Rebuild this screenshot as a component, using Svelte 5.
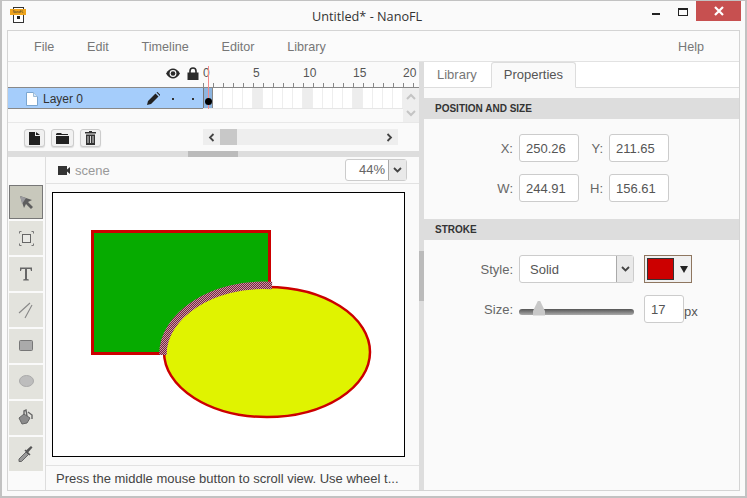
<script>
  const menus = ['File', 'Edit', 'Timeline', 'Editor', 'Library'];
  const frames = Array.from({ length: 20 }, (_, i) => i);
  const labels = [0, 5, 10, 15, 20];
  const tools = ['select', 'transform', 'text', 'line', 'rect', 'ellipse', 'fill', 'dropper'];
</script>

<div class="window">
  <header class="titlebar">
    <div class="logo">
      <span class="logo-band">NanoFL</span>
      <span class="logo-dot"></span>
    </div>
    <div class="title">Untitled* - NanoFL</div>
    <div class="controls">
      <span class="min"></span>
      <span class="max"></span>
      <span class="close">
        <svg width="12" height="12" viewBox="0 0 12 12"><path d="M2 2l8 8M10 2l-8 8" stroke="#fff" stroke-width="2.2" /></svg>
      </span>
    </div>
  </header>

  <div class="frame">
    <nav class="menu">
      {#each menus as m}
        <span class="menu-item">{m}</span>
      {/each}
      <span class="help">Help</span>
    </nav>

    <div class="main">
      <div class="left">
        <section class="timeline">
          <div class="tl-head">
            <div class="tl-icons">
              <svg width="14" height="11" viewBox="0 0 14 11"><path d="M0 5.5C2 2 4.5.5 7 .5s5 1.500 7 5c-2 3.500-4.500 5-7 5s-5-1.500-7-5z" fill="#2a2a2a" /><circle cx="7" cy="5.500" r="3.400" fill="#fafafa" /><circle cx="7" cy="5.500" r="2.300" fill="#2a2a2a" /></svg>
              <svg width="12" height="13" viewBox="0 0 12 13"><path d="M3 6V4a3 3 0 0 1 6 0v2" fill="none" stroke="#2a2a2a" stroke-width="1.600" /><rect x="0.500" y="5.500" width="11" height="7.500" fill="#2a2a2a" /></svg>
            </div>
            <div class="ruler">
              <div class="ruler-labels">
                {#each labels as l}
                  <span>{l}</span>
                {/each}
              </div>
              <div class="ticks"></div>
            </div>
          </div>

          <div class="tl-row">
            <div class="layer">
              <svg class="doc" width="12" height="14" viewBox="0 0 12 14"><path d="M.5.500h7l4 4v9H.5z" fill="#fff" stroke="#7ba6d0" /><path d="M7.500.500v4h4" fill="#d8e6f4" stroke="#9dbbd8" /></svg>
              <span class="layer-name">Layer 0</span>
              <svg class="pencil" width="13" height="13" viewBox="0 0 13 13"><path d="M0 13l1-4 7.500-7.500 3 3L4 12zM9.500.500l1-.500 3 3-.500 1z" fill="#222" /></svg>
              <span class="dot"></span>
              <span class="dot"></span>
            </div>
            <div class="cells">
              {#each frames as f}
                <span class="cell" class:active={f === 0} class:fifth={f % 5 === 0 && f > 0}></span>
              {/each}
            </div>
            <div class="v-scroll">
              <svg width="10" height="7" viewBox="0 0 10 7"><path d="M1 6l4-4 4 4" fill="none" stroke="#c4c4c4" stroke-width="2" /></svg>
              <svg width="10" height="7" viewBox="0 0 10 7"><path d="M1 1l4 4 4-4" fill="none" stroke="#c4c4c4" stroke-width="2" /></svg>
            </div>
            <div class="playhead"></div>
            <span class="keyframe"></span>
          </div>

          <div class="tl-tools">
            <div class="tl-buttons">
              <button class="small-btn" aria-label="New layer">
                <svg width="11" height="13" viewBox="0 0 11 13"><path d="M0 0h6v4h5v9H0zM7 0l4 3H7z" fill="#222" /></svg>
              </button>
              <button class="small-btn wide" aria-label="New folder">
                <svg width="13" height="11" viewBox="0 0 13 11"><path d="M1 0h4l1 1h6v1H0V1zM0 3h13v8H0z" fill="#222" /></svg>
              </button>
              <button class="small-btn" aria-label="Delete layer">
                <svg width="11" height="14" viewBox="0 0 11 14"><path d="M4 0h3v1h4v1.500H0V1h4zM1 3.500h9V14H1z" fill="#333" /><path d="M3 5v7M5.500 5v7M8 5v7" stroke="#ddd" /></svg>
              </button>
            </div>
            <div class="h-scroll">
              <svg width="7" height="9" viewBox="0 0 7 9"><path d="M5.500 1L2 4.500 5.500 8" fill="none" stroke="#444" stroke-width="1.800" /></svg>
              <span class="h-thumb"></span>
              <svg class="h-next" width="7" height="9" viewBox="0 0 7 9"><path d="M1.500 1L5 4.500 1.500 8" fill="none" stroke="#444" stroke-width="1.800" /></svg>
            </div>
          </div>
        </section>

        <div class="h-split"><span></span></div>

        <div class="workspace">
          <aside class="tools">
            {#each tools as t}
              <button class="tool" class:selected={t === 'select'} aria-label={t}>
                <svg width="22" height="22" viewBox="0 0 22 22">
                  {#if t === 'select'}
                    <path d="M5 5l12 4-4 2 5 5-2 2-5-5-2 4z" fill="#5e5e5e" /><path d="M5 5l6 2-4 6z" fill="#9a9a9e" />
                  {:else if t === 'transform'}
                    <rect x="7.500" y="7.500" width="8" height="8" fill="#eaeae6" stroke="#666" />
                    <path d="M4.500 6.500v-2h2M16.500 4.500h2v2M4.500 16.500v2h2M16.500 18.500h2v-2" fill="none" stroke="#777" />
                  {:else if t === 'text'}
                    <path d="M5 4.500h12v3.500h-1l-.6-2H12V16l1.800.4V17.500H8.200v-1.100L10 16V6H6.600L6 8H5z" fill="#666" />
                  {:else if t === 'line'}
                    <path d="M4 14L15 4M10 19L17 6" stroke="#888" stroke-width="1.100" />
                  {:else if t === 'rect'}
                    <rect x="4.500" y="5.500" width="13" height="10" rx="1" fill="#aaa" stroke="#777" />
                  {:else if t === 'ellipse'}
                    <ellipse cx="11.500" cy="10" rx="7" ry="5.500" fill="#bdbdbd" stroke="#aaa" />
                  {:else if t === 'fill'}
                    <path d="M4 11l5-4 6 4-3 5-5 1z" fill="#8c8c8c" stroke="#666" /><path d="M9 8V4l2-1 1 6M13 5l4 3v4" fill="none" stroke="#666" stroke-width="1.400" />
                  {:else}
                    <path d="M4 16l7-7 2.500 2.500-7 7H4z" fill="#999" stroke="#666" /><path d="M11 7.500l2 2 4.500-5-1.500-1.500z" fill="#555" /><path d="M10 7l5 5" stroke="#555" stroke-width="1.500" />
                  {/if}
                </svg>
              </button>
            {/each}
          </aside>

          <div class="scene">
            <div class="scene-head">
              <svg width="12" height="9" viewBox="0 0 12 9"><path d="M0 0h9v9H0zM9 3.500L12 1v7L9 5.500z" fill="#333" /></svg>
              <span class="scene-name">scene</span>
              <div class="zoom-box">
                <span class="zoom-val">44%</span>
                <span class="zoom-btn">
                  <svg width="9" height="6" viewBox="0 0 9 6"><path d="M1 1l3.500 3.500L8 1" fill="none" stroke="#444" stroke-width="1.800" /></svg>
                </span>
              </div>
            </div>
            <div class="stage-wrap">
              <svg class="stage" width="353" height="265" viewBox="52 192 353 265">
                <defs>
                  <pattern id="checks" width="2" height="2" patternUnits="userSpaceOnUse">
                    <rect width="2" height="2" fill="#7a2040" />
                    <rect width="1" height="1" fill="#c89aa4" />
                    <rect x="1" y="1" width="1" height="1" fill="#c89aa4" />
                  </pattern>
                </defs>
                <rect x="52.500" y="192.500" width="352" height="264" fill="#fff" stroke="#000" />
                <rect x="92.500" y="231.500" width="177" height="122" fill="#06ab00" stroke="#cc0000" stroke-width="3" />
                <ellipse cx="267" cy="352" rx="103" ry="65" fill="#e0f300" stroke="#cc0000" stroke-width="2.500" />
                <path d="M163 355C162 316 212 282 272 285.500" fill="none" stroke="url(#checks)" stroke-width="7.500" />
              </svg>
            </div>
            <div class="status">Press the middle mouse button to scroll view. Use wheel t...</div>
          </div>
        </div>
      </div>

      <div class="v-split"><span></span></div>

      <div class="right">
        <div class="tabs">
          <span class="tab">Library</span>
          <span class="tab current">Properties</span>
        </div>

        <h3 class="section first">POSITION AND SIZE</h3>
        <div class="pos-grid">
          <label for="x">X:</label><input id="x" value="250.26" />
          <label for="y">Y:</label><input id="y" value="211.65" />
          <label for="w">W:</label><input id="w" value="244.91" />
          <label for="h">H:</label><input id="h" value="156.61" />
        </div>

        <h3 class="section">STROKE</h3>
        <div class="stroke-grid">
          <span class="lab">Style:</span>
          <div class="select">
            <span class="select-val">Solid</span>
            <span class="select-btn">
              <svg width="9" height="6" viewBox="0 0 9 6"><path d="M1 1l3.500 3.500L8 1" fill="none" stroke="#444" stroke-width="1.800" /></svg>
            </span>
          </div>
          <div class="color">
            <span class="swatch"></span>
            <span class="caret"></span>
          </div>

          <span class="lab">Size:</span>
          <div class="slider"><span class="handle"></span></div>
          <div class="size-val">
            <input value="17" />
            <span class="unit">px</span>
          </div>
        </div>
      </div>
    </div>
  </div>
</div>

<style>
  :global(body) {
    margin: 0;
    background: #fafafa;
  }

  .window {
    width: 747px;
    height: 498px;
    box-sizing: border-box;
    display: flex;
    flex-direction: column;
    border: 2px solid #c2c2c2;
    border-top-width: 1px;
    background: #fafafa;
    font-family: 'Liberation Sans', Arial, sans-serif;
    font-size: 13px;
    color: #555;
    overflow: hidden;
  }

  /* title bar */
  .titlebar {
    height: 29px;
    flex: none;
    display: flex;
    align-items: flex-start;
    position: relative;
  }
  .logo {
    position: relative;
    width: 11px;
    height: 16px;
    margin: 6px 0 0 11px;
    border: 1px solid #333;
    box-sizing: border-box;
    background: #fff;
  }
  .logo-band {
    position: absolute;
    left: -4px;
    top: 1px;
    width: 16px;
    height: 6px;
    background: #eea41e;
    color: #333;
    font-size: 3px;
    line-height: 6px;
    text-align: center;
    overflow: hidden;
  }
  .logo-dot {
    position: absolute;
    left: 3px;
    top: 8px;
    width: 3px;
    height: 3px;
    background: #222;
  }
  .title {
    position: absolute;
    left: 310px;
    top: 6px;
    font-family: 'Open Sans', sans-serif;
    font-size: 12.7px;
    line-height: 18px;
    color: #333;
  }
  .controls {
    margin-left: auto;
    display: flex;
    align-items: flex-start;
    margin-right: 4px;
  }
  .min {
    width: 8px;
    height: 2px;
    margin: 12px 18px 0 0;
    background: #222;
  }
  .max {
    width: 8px;
    height: 5px;
    margin: 7px 8px 0 0;
    border: 1px solid #222;
    border-top-width: 2px;
  }
  .close {
    width: 45px;
    height: 20px;
    background: #c75050;
    display: flex;
    align-items: center;
    justify-content: center;
  }

  /* inner frame */
  .frame {
    flex: 1;
    min-height: 0;
    margin: 0 5px 5px 5px;
    border: 1px solid #d4d4d4;
    display: flex;
    flex-direction: column;
  }
  .menu {
    flex: none;
    display: flex;
    align-items: center;
    border-bottom: 1px solid #e2e2e2;
    padding: 1px 0 0 26px;
    height: 29px;
    font-size: 12.6px;
    color: #777;
    background: #fbfbfb;
  }
  .menu-item {
    margin-right: 32.8px;
  }
  .help {
    margin-left: auto;
    margin-right: 35px;
  }

  .main {
    flex: 1;
    min-height: 0;
    display: flex;
  }
  .left {
    width: 411px;
    flex: none;
    display: flex;
    flex-direction: column;
  }

  /* timeline */
  .timeline {
    height: 89px;
    flex: none;
    display: flex;
    flex-direction: column;
  }
  .tl-head {
    height: 25px;
    flex: none;
    display: flex;
    border-bottom: 1px solid #888;
  }
  .tl-icons {
    width: 195px;
    flex: none;
    box-sizing: border-box;
    display: flex;
    justify-content: flex-end;
    align-items: flex-start;
    gap: 7px;
    padding: 5px 4px 0 0;
  }
  .tl-icons svg:first-child {
    margin-top: 1px;
  }
  .ruler {
    flex: 1;
    position: relative;
    overflow: hidden;
  }
  .ruler-labels {
    display: flex;
    padding-top: 4px;
    font-size: 12px;
  }
  .ruler-labels span {
    width: 50px;
    flex: none;
  }
  .ticks {
    position: absolute;
    left: 0;
    right: 0;
    bottom: 0;
    height: 4px;
    background: repeating-linear-gradient(to right, #888 0 1px, transparent 1px 10px);
  }
  .tl-row {
    height: 21px;
    flex: none;
    display: flex;
    position: relative;
  }
  .layer {
    width: 195px;
    flex: none;
    height: 21px;
    box-sizing: border-box;
    display: flex;
    align-items: center;
    background: #a5cdfb;
    border-bottom: 1px solid #888;
    padding: 1px 0 0 18px;
    font-size: 12px;
    color: #333;
  }
  .layer-name {
    margin-left: 5px;
    width: 104px;
  }
  .pencil {
    margin-right: 12px;
  }
  .dot {
    width: 2px;
    height: 2px;
    background: #333;
    margin-right: 18px;
  }
  .dot:last-child {
    margin-right: 0;
  }
  .cells {
    width: 200px;
    flex: none;
    height: 21px;
    display: flex;
    background: #fff;
    border-bottom: 1px solid #e6e6e6;
    box-sizing: border-box;
  }
  .cell {
    width: 10px;
    box-sizing: border-box;
    border-right: 1px solid #eee;
  }
  .cell.active {
    background: #8db5e0;
    border-left: 1px solid #777;
    border-right: 1px solid #888;
  }
  .cell.fifth {
    background: #ededed;
  }
  .keyframe {
    position: absolute;
    left: 197px;
    top: 10px;
    width: 7px;
    height: 7px;
    border-radius: 50%;
    background: #000;
  }
  .v-scroll {
    width: 16px;
    height: 34px;
    flex: none;
    background: #eee;
    display: flex;
    flex-direction: column;
    align-items: center;
    justify-content: space-around;
  }
  .playhead {
    position: absolute;
    left: 200px;
    top: -22px;
    width: 1px;
    height: 43px;
    background: #f58a8a;
  }
  .tl-tools {
    flex: 1;
    margin-top: 13px;
    border-top: 1px solid #e8e8e8;
    display: flex;
    align-items: flex-start;
    position: relative;
  }
  .tl-buttons {
    display: flex;
    gap: 6px;
    padding: 6px 0 0 16px;
    width: 195px;
    box-sizing: border-box;
  }
  .small-btn {
    width: 21px;
    height: 18px;
    padding: 0;
    box-sizing: border-box;
    border: 1px solid #ccc;
    border-radius: 3px;
    background: #f1f1f1;
    box-shadow: 0 1px 1px #ddd;
    display: flex;
    align-items: center;
    justify-content: center;
  }
  .small-btn.wide {
    width: 23px;
  }
  .h-scroll {
    width: 195px;
    height: 16px;
    margin-top: 6px;
    background: #eee;
    display: flex;
    align-items: center;
    padding-left: 5px;
    box-sizing: border-box;
  }
  .h-thumb {
    width: 17px;
    height: 16px;
    background: #c8c8c8;
    margin-left: 5px;
  }
  .h-next {
    margin-left: auto;
    margin-right: 5px;
  }

  .h-split {
    height: 6px;
    flex: none;
    background: #ddd;
    position: relative;
  }
  .h-split span {
    display: block;
    width: 50px;
    height: 6px;
    margin-left: 180px;
    background: #bbb;
  }

  /* workspace */
  .workspace {
    flex: 1;
    min-height: 0;
    display: flex;
  }
  .tools {
    width: 38px;
    flex: none;
    box-sizing: border-box;
    border-right: 1px solid #ddd;
    padding: 28px 0 0 1px;
    display: flex;
    flex-direction: column;
    gap: 2px;
  }
  .tool {
    width: 34px;
    height: 34px;
    padding: 0;
    border: none;
    background: #e3e3dd;
    display: flex;
    align-items: center;
    justify-content: center;
  }
  .tool.selected {
    background: #c8c8bc;
    border: 1px solid #777;
  }
  .scene {
    flex: 1;
    min-width: 0;
    display: flex;
    flex-direction: column;
  }
  .scene-head {
    height: 27px;
    flex: none;
    box-sizing: border-box;
    display: flex;
    align-items: center;
    border-bottom: 1px solid #e2e2e2;
    padding-left: 12px;
  }
  .scene-name {
    margin-left: 5px;
    color: #999;
  }
  .zoom-box {
    margin-left: auto;
    margin-right: 12px;
    width: 62px;
    height: 22px;
    box-sizing: border-box;
    display: flex;
    border: 1px solid #ccc;
    border-radius: 3px;
    background: #fff;
  }
  .zoom-val {
    flex: 1;
    text-align: right;
    padding-right: 3px;
    line-height: 20px;
    color: #666;
  }
  .zoom-btn {
    width: 17px;
    background: #e9e9e9;
    border-left: 1px solid #aaa;
    display: flex;
    align-items: center;
    justify-content: center;
  }
  .stage-wrap {
    flex: 1;
    min-height: 0;
    padding: 8px 0 0 6px;
  }
  .stage {
    display: block;
  }
  .status {
    height: 25px;
    flex: none;
    box-sizing: border-box;
    border-top: 1px solid #e2e2e2;
    padding-left: 10px;
    line-height: 26px;
    color: #444;
    white-space: nowrap;
  }

  .v-split {
    width: 5px;
    flex: none;
    background: #ddd;
  }
  .v-split span {
    display: block;
    height: 50px;
    margin-top: 189px;
    background: #bbb;
  }

  /* properties panel */
  .right {
    flex: 1;
    min-width: 0;
    display: flex;
    flex-direction: column;
  }
  .tabs {
    height: 26px;
    flex: none;
    box-sizing: border-box;
    display: flex;
    border-bottom: 1px solid #ddd;
    background: #fff;
  }
  .tab {
    box-sizing: border-box;
    height: 26px;
    padding: 0 14px 0 13px;
    line-height: 26px;
    color: #777;
  }
  .tab.current {
    height: 26px;
    width: 85px;
    border: 1px solid #ddd;
    border-bottom-color: #fafafa;
    border-radius: 3px 3px 0 0;
    background: #fafafa;
    color: #555;
    line-height: 24px;
    padding: 0 12px;
  }
  .section {
    margin: 0;
    height: 21px;
    flex: none;
    background: #ddd;
    font-size: 10px;
    font-weight: bold;
    line-height: 21px;
    padding-left: 11px;
    color: #333;
  }
  .section.first {
    margin-top: 10px;
  }
  .pos-grid {
    display: grid;
    grid-template-columns: 90px 60px 30px 60px;
    grid-auto-rows: 28px;
    row-gap: 12px;
    padding: 15px 0 17px 5px;
    align-items: center;
  }
  label, .lab {
    text-align: right;
    padding-right: 6px;
    color: #666;
  }
  input {
    box-sizing: border-box;
    width: 60px;
    height: 28px;
    border: 1px solid #ccc;
    border-radius: 3px;
    background: #fff;
    font: 13px 'Liberation Sans', Arial, sans-serif;
    color: #555;
    padding: 0 6px;
    margin: 0;
  }
  .stroke-grid {
    display: grid;
    grid-template-columns: 90px 115px auto;
    grid-auto-rows: 28px;
    row-gap: 12px;
    padding: 15px 0 0 5px;
    align-items: center;
  }
  .select {
    box-sizing: border-box;
    height: 28px;
    display: flex;
    border: 1px solid #ccc;
    border-radius: 3px;
    background: #fff;
  }
  .select-val {
    flex: 1;
    padding-left: 10px;
    line-height: 27px;
  }
  .select-btn {
    width: 16px;
    border-left: 1px solid #aaa;
    background: #e9e9e9;
    display: flex;
    align-items: center;
    justify-content: center;
  }
  .color {
    width: 48px;
    height: 28px;
    margin-left: 10px;
    box-sizing: border-box;
    border: 1px solid #8e7660;
    background: #f0f0f0;
    display: flex;
    align-items: center;
    padding-left: 2px;
  }
  .swatch {
    width: 27px;
    height: 22px;
    box-sizing: border-box;
    background: #cc0000;
    border: 1px solid #333;
  }
  .caret {
    width: 0;
    height: 0;
    margin-left: 6px;
    border: 4px solid transparent;
    border-top: 7px solid #222;
    border-bottom: 0;
  }
  .slider {
    height: 6px;
    margin-top: 5px;
    border-radius: 3px;
    background: linear-gradient(#555, #aaa);
    position: relative;
  }
  .handle {
    position: absolute;
    left: 14px;
    top: -8px;
    width: 12px;
    height: 15px;
    background: #c8c8c8;
    clip-path: polygon(42% 0, 58% 0, 100% 70%, 100% 100%, 0 100%, 0 70%);
  }
  .size-val {
    display: flex;
    align-items: flex-end;
    margin-left: 10px;
  }
  .size-val input {
    width: 40px;
  }
  .unit {
    padding-bottom: 4px;
  }
</style>
